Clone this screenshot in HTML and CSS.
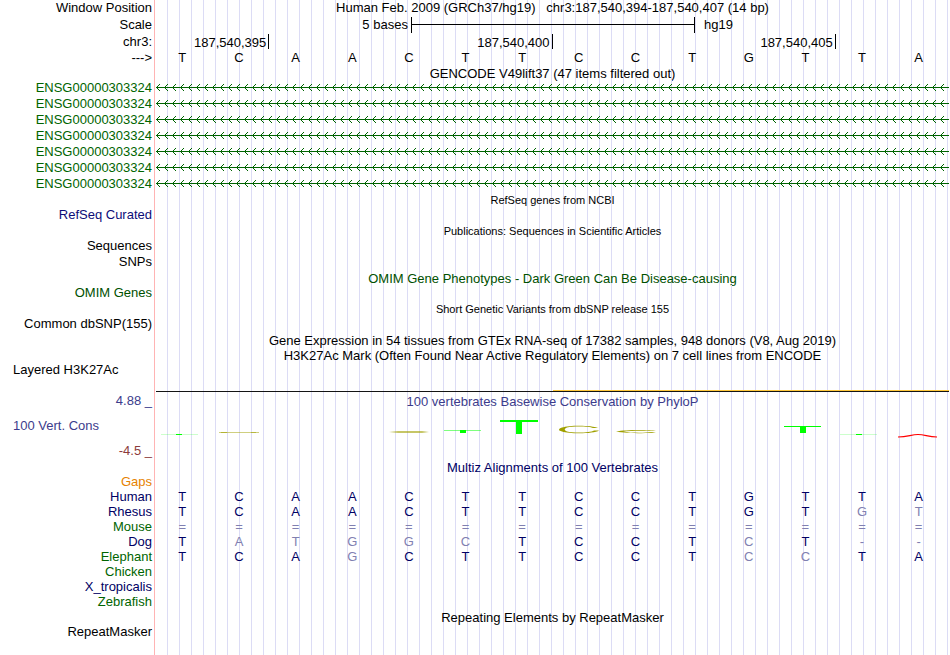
FILE: index.html
```
<!DOCTYPE html>
<html lang="en">
<head>
    <meta charset="UTF-8">
    <meta name="viewport" content="width=device-width, initial-scale=1.0">
    <title>Human chr3:187,540,394-187,540,407 Genome Browser</title>
    <link rel="stylesheet" href="styles.css">
</head>
<body>
    <!-- Shared pattern for the gene strand arrows -->
    <svg class="defs" width="0" height="0" aria-hidden="true">
        <defs>
            <pattern id="strand" width="8" height="16" patternUnits="userSpaceOnUse">
                <path d="M4 4 L0.500 7.500 L4 11" fill="none" stroke="#006400" stroke-width="1"/>
            </pattern>
        </defs>
    </svg>

    <main class="browser">
        <!-- Position and ruler -->
        <div class="row">
            <div class="label">Window Position</div>
            <div class="data title top">Human Feb. 2009 (GRCh37/hg19) &nbsp; chr3:187,540,394-187,540,407 (14 bp)</div>
        </div>
        <div class="row scale-row">
            <div class="label">Scale</div>
            <div class="data scale">
                <span class="scale-size">5 bases</span>
                <span class="scale-bar"></span>
                <span class="scale-db">hg19</span>
            </div>
        </div>
        <div class="row">
            <div class="label">chr3:</div>
            <div class="data ruler">
                <span class="tick">187,540,395</span>
                <span class="tick">187,540,400</span>
                <span class="tick">187,540,405</span>
            </div>
        </div>
        <div class="row">
            <div class="label">---&gt;</div>
            <div class="data"><div class="bases" data-seq="TCAACTTCCTGTTA"></div></div>
        </div>

        <!-- GENCODE -->
        <div class="row short">
            <div class="label"></div>
            <div class="data title top">GENCODE V49lift37 (47 items filtered out)</div>
        </div>
        <div id="genes"></div>

        <!-- RefSeq, publications, variants -->
        <div class="row compact">
            <div class="label"></div>
            <div class="data title small top">RefSeq genes from NCBI</div>
        </div>
        <div class="row compact">
            <div class="label blue">RefSeq Curated</div>
            <div class="data"></div>
        </div>
        <div class="row">
            <div class="label"></div>
            <div class="data title small">Publications: Sequences in Scientific Articles</div>
        </div>
        <div class="row">
            <div class="label">Sequences</div>
            <div class="data"></div>
        </div>
        <div class="row">
            <div class="label">SNPs</div>
            <div class="data"></div>
        </div>
        <div class="row compact">
            <div class="label"></div>
            <div class="data title omim">OMIM Gene Phenotypes - Dark Green Can Be Disease-causing</div>
        </div>
        <div class="row">
            <div class="label omim">OMIM Genes</div>
            <div class="data"></div>
        </div>
        <div class="row compact">
            <div class="label"></div>
            <div class="data title small top">Short Genetic Variants from dbSNP release 155</div>
        </div>
        <div class="row">
            <div class="label">Common dbSNP(155)</div>
            <div class="data"></div>
        </div>

        <!-- Expression and regulation -->
        <div class="row">
            <div class="label"></div>
            <div class="data title">Gene Expression in 54 tissues from GTEx RNA-seq of 17382 samples, 948 donors (V8, Aug 2019)</div>
        </div>
        <div class="row compact">
            <div class="label"></div>
            <div class="data title top">H3K27Ac Mark (Often Found Near Active Regulatory Elements) on 7 cell lines from ENCODE</div>
        </div>
        <div class="row signal">
            <div class="label side">Layered H3K27Ac</div>
            <div class="data histone"><div class="histone-level"></div></div>
        </div>

        <!-- Conservation -->
        <div class="row">
            <div class="label cons">4.88 _</div>
            <div class="data title cons">100 vertebrates Basewise Conservation by PhyloP</div>
        </div>
        <div class="row wiggle">
            <div class="label wiggle-label">
                <span class="side cons">100 Vert. Cons</span>
                <span class="low">-4.5 _</span>
            </div>
            <div class="data">
                <svg class="logo" viewBox="0 0 793 50" preserveAspectRatio="none" role="img" aria-label="PhyloP scores by base">
                    <g fill="#00ff00">
                        <rect x="5" y="25" width="37" height="1" opacity="0.2"/>
                        <rect x="20" y="25" width="6" height="1"/>
                        <rect x="288" y="21" width="37" height="1" opacity="0.5"/>
                        <rect x="304" y="21" width="6" height="3"/>
                        <rect x="344" y="11" width="38" height="2"/>
                        <rect x="360" y="12" width="6" height="13"/>
                        <rect x="628" y="17" width="37" height="1"/>
                        <rect x="644" y="17" width="6" height="7"/>
                        <rect x="684" y="25" width="37" height="1" opacity="0.2"/>
                        <rect x="700" y="25" width="6" height="1"/>
                    </g>
                    <g fill="#a0a000">
                        <rect x="63" y="23" width="40" height="1" opacity="0.5"/>
                        <rect x="65" y="23" width="6" height="1" opacity="0.6"/>
                        <rect x="95" y="23" width="5" height="1" opacity="0.5"/>
                        <path d="M233 23 L242 22 H266 L273 23 L266 24 H242 Z" opacity="0.6"/>
                        <path d="M442 19 C436 16 413 16 406 18.500 C402 20 402 21.500 406 22.500 C413 25 438 25 443 21.500 L438 21.500 C434 24 417 24 411 22.500 C408 21 408 20 411 18.500 C417 17 433 17 437 19 Z"/>
                        <path d="M500 22 C493 20.500 470 20.500 460 22.500 C470 24.500 493 24.500 500 23.500 L496 23 C488 24 475 24 467 22.500 C475 21.500 488 21.500 496 22 Z"/>
                    </g>
                    <path d="M742 28 C752 28 755 25.500 762 25.500 C769 25.500 772 28 781 28" fill="none" stroke="#ff0000" stroke-width="1.200"/>
                </svg>
            </div>
        </div>

        <!-- Multiz alignment -->
        <div class="row compact">
            <div class="label"></div>
            <div class="data title navy">Multiz Alignments of 100 Vertebrates</div>
        </div>
        <div class="row compact">
            <div class="label gaps">Gaps</div>
            <div class="data"></div>
        </div>
        <div id="alignments"></div>

        <div class="row compact">
            <div class="label"></div>
            <div class="data title">Repeating Elements by RepeatMasker</div>
        </div>
        <div class="row">
            <div class="label">RepeatMasker</div>
            <div class="data"></div>
        </div>
        <div class="row rest">
            <div class="label"></div>
            <div class="data"></div>
        </div>
    </main>

    <script src="script.js"></script>
</body>
</html>
```
FILE: styles.css
```
:root {
    --grid-line: #dcdcf5;
    --edge-line: #ffb4b4;
    --green: #006400;
    --omim: #005000;
    --blue: #0c0c78;
    --navy: #000064;
    --cons: #3c3c8c;
    --low: #8c3c3c;
    --gaps: #e68200;
}

* {
    margin: 0;
    padding: 0;
    box-sizing: border-box;
}

body {
    background-color: #fff;
    color: #000;
    font-family: "Liberation Sans", Arial, Helvetica, sans-serif;
    font-size: 13px;
    line-height: 16px;
}

.defs {
    position: absolute;
}

.browser {
    display: flex;
    flex-direction: column;
    min-height: 100vh;
    padding-right: 1px;
}

/* Rows */
.row {
    display: grid;
    grid-template-columns: 155px 1fr;
    height: 16px;
}

.compact {
    height: 15px;
    line-height: 15px;
}

.short {
    height: 14px;
}

.scale-row {
    height: 18px;
    line-height: 18px;
}

.signal {
    height: 30px;
}

.wiggle {
    height: 50px;
}

.rest {
    flex: 1;
}

.label {
    border-right: 1px solid var(--edge-line);
    padding-right: 2px;
    text-align: right;
    white-space: nowrap;
}

.data {
    border-left: 1px solid #fff;
    background: repeating-linear-gradient(to right, transparent 0 11px, var(--grid-line) 11px 12px) padding-box;
    min-width: 0;
    white-space: nowrap;
}

.title {
    text-align: center;
    line-height: 18px;
}

.top {
    line-height: 16px;
}

.small {
    font-size: 11px;
}

/* Ruler */
.scale {
    display: grid;
    grid-template-columns: 9fr 10fr 9fr;
}

.scale-size {
    padding-right: 3px;
    text-align: right;
}

.scale-bar {
    height: 16px;
    margin-top: 1px;
    margin-right: -1px;
    border: solid #000;
    border-width: 0 1px;
    background: linear-gradient(#000, #000) 0 7px / 100% 1px no-repeat;
}

.scale-db {
    padding-left: 10px;
}

.ruler {
    display: grid;
    grid-template-columns: 2fr 5fr 5fr 2fr;
}

.tick {
    height: 15px;
    border-right: 1px solid #000;
    padding-right: 2px;
    text-align: right;
    line-height: 17px;
}

.bases {
    display: grid;
    grid-template-columns: repeat(14, 1fr);
    margin: 0 2px 0 -2px;
    text-align: center;
}

/* Genes */
.strand {
    display: block;
    width: 100%;
    height: 16px;
}

/* Signal tracks */
.side {
    padding-left: 13px;
    text-align: left;
}

.signal .label {
    line-height: 14px;
}

.histone {
    display: flex;
    flex-direction: column;
    align-items: flex-end;
    padding-top: 27px;
}

.histone-level {
    width: 50%;
    height: 1px;
    background-color: #ffc83c;
}

.histone::after {
    content: "";
    width: 100%;
    height: 1px;
    background-color: #141414;
}

.wiggle-label {
    display: flex;
    flex-direction: column;
    justify-content: space-between;
    padding-top: 9px;
}

.low {
    color: var(--low);
}

.logo {
    display: block;
    width: 100%;
    height: 50px;
}

/* Colors */
.green {
    color: var(--green);
}

.omim {
    color: var(--omim);
}

.blue {
    color: var(--blue);
}

.navy {
    color: var(--navy);
}

.cons {
    color: var(--cons);
}

.gaps {
    color: var(--gaps);
}

.mismatch {
    color: #8080b1;
}
```
FILE: script.js
```
const reference = 'TCAACTTCCTGTTA';

const species = [
    { name: 'Human', color: 'navy', seq: 'TCAACTTCCTGTTA' },
    { name: 'Rhesus', color: 'navy', seq: 'TCAACTTCCTGTGT' },
    { name: 'Mouse', color: 'green', seq: '==============' },
    { name: 'Dog', color: 'navy', seq: 'TATGGCTCCTCT--' },
    { name: 'Elephant', color: 'green', seq: 'TCAGCTTCCTCCTA' },
    { name: 'Chicken', color: 'green', seq: '' },
    { name: 'X_tropicalis', color: 'navy', seq: '' },
    { name: 'Zebrafish', color: 'green', seq: '' }
];

// Bases that differ from the human sequence are drawn lighter
function renderBases(seq) {
    return [...seq].map((base, i) => {
        const cls = base === reference[i] ? '' : ' class="mismatch"';
        return `<span${cls}>${base}</span>`;
    }).join('');
}

document.querySelectorAll('[data-seq]').forEach(el => {
    el.innerHTML = renderBases(el.dataset.seq);
});

document.getElementById('genes').innerHTML = Array(7).fill('ENSG00000303324').map(gene => `
    <div class="row">
        <div class="label green">${gene}</div>
        <div class="data">
            <svg class="strand">
                <rect width="100%" height="16" fill="url(#strand)"/>
                <rect y="7" width="100%" height="1" fill="#006400"/>
            </svg>
        </div>
    </div>
`).join('');

document.getElementById('alignments').innerHTML = species.map(s => `
    <div class="row compact">
        <div class="label ${s.color}">${s.name}</div>
        <div class="data"><div class="bases navy">${renderBases(s.seq)}</div></div>
    </div>
`).join('');
```
